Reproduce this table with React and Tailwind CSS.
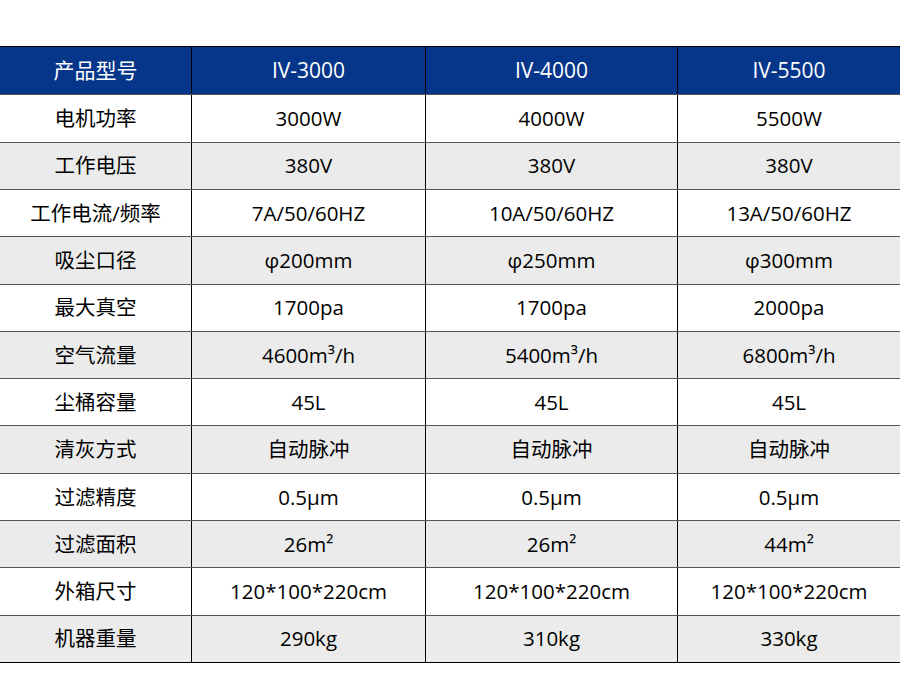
import React from 'react';

const rows = [
  ['电机功率', '3000W', '4000W', '5500W'],
  ['工作电压', '380V', '380V', '380V'],
  ['工作电流/频率', '7A/50/60HZ', '10A/50/60HZ', '13A/50/60HZ'],
  ['吸尘口径', 'φ200mm', 'φ250mm', 'φ300mm'],
  ['最大真空', '1700pa', '1700pa', '2000pa'],
  ['空气流量', '4600m³/h', '5400m³/h', '6800m³/h'],
  ['尘桶容量', '45L', '45L', '45L'],
  ['清灰方式', '自动脉冲', '自动脉冲', '自动脉冲'],
  ['过滤精度', '0.5μm', '0.5μm', '0.5μm'],
  ['过滤面积', '26m²', '26m²', '44m²'],
  ['外箱尺寸', '120*100*220cm', '120*100*220cm', '120*100*220cm'],
  ['机器重量', '290kg', '310kg', '330kg'],
];

const cols = 'grid grid-cols-[191px_234px_252px_223px]';
const isCjk = (t) => /[\u4e00-\u9fff]/.test(t);

function Cell({ children, first }) {
  const weight = isCjk(children) ? 'font-normal' : 'font-medium';
  return (
    <div className={`flex items-center justify-center ${weight} ${first ? '' : 'border-l border-black'}`}>
      {children}
    </div>
  );
}

export default function App() {
  return (
    <div
      className="w-[900px] h-[700px] bg-white pt-[46px] text-[20.5px] text-black"
      style={{ fontFamily: '"Open Sans", "Noto Sans CJK SC", sans-serif' }}
    >
      <div className="border-t border-b border-black grid grid-rows-[repeat(13,1fr)] h-[617px]">
        <div className={`${cols} bg-[#05368a] text-white text-[21px]`}>
          {['产品型号', 'IV-3000', 'IV-4000', 'IV-5500'].map((t, i) => (
            <Cell key={i} first={i === 0}>{t}</Cell>
          ))}
        </div>
        {rows.map((r, ri) => (
          <div
            key={ri}
            className={`${cols} border-t border-[#555] ${ri % 2 === 1 ? 'bg-[#ebebeb]' : 'bg-white'}`}
          >
            {r.map((t, i) => (
              <Cell key={i} first={i === 0}>{t}</Cell>
            ))}
          </div>
        ))}
      </div>
    </div>
  );
}
